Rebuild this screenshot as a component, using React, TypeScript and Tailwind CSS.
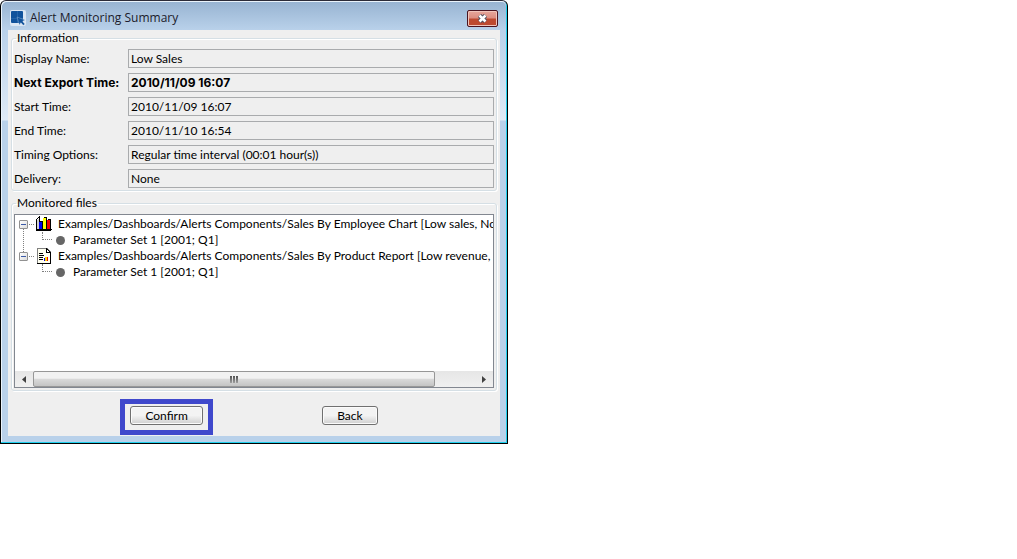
import { ReactNode } from "react";

type Field = { id: string; label: string; value: string; bold?: boolean };

const fields: Field[] = [
  { id: "display-name", label: "Display Name:", value: "Low Sales" },
  { id: "next-export", label: "Next Export Time:", value: "2010/11/09 16:07", bold: true },
  { id: "start-time", label: "Start Time:", value: "2010/11/09 16:07" },
  { id: "end-time", label: "End Time:", value: "2010/11/10 16:54" },
  { id: "timing", label: "Timing Options:", value: "Regular time interval (00:01 hour(s))" },
  { id: "delivery", label: "Delivery:", value: "None" },
];

function AppIcon() {
  return (
    <svg width="16" height="16" viewBox="0 0 16 16" aria-hidden="true" className="shrink-0">
      <rect width="16" height="16" rx="2" fill="#dbe6f3" />
      <rect x="1" y="1" width="12" height="12" rx="1" fill="#10529c" />
      <path d="M7.500 1v12M1 8.500h12" stroke="#2f6db2" strokeWidth=".6" />
      <path d="M7 7l8 3-2.600 1.200 2.400 2.800-1.500 1.300-2.500-2.800L9.500 15z" fill="#10529c" stroke="#dbe6f3" strokeWidth=".3" />
    </svg>
  );
}

function ChartIcon() {
  return (
    <svg width="16" height="16" viewBox="0 0 16 16" aria-hidden="true" shapeRendering="crispEdges" className="shrink-0">
      <path d="M1 4l3-3v11l-3 2z" fill="#d0d0d0" />
      <path d="M0 3h1v12H0zM1 2h1v1H1zM2 1h1v1H2zM3 0h1v6H3zM0 14h15v1H0zM1 13h15v1H1z" fill="#000" />
      <path d="M3 6h3v7H3z" fill="#0000f0" />
      <path d="M4 5h3v1H4zM6 6h1v7H6z" fill="#000" />
      <path d="M7 2h3v11H7z" fill="#ffff00" />
      <path d="M8 1h3v1H8zM10 2h1v11h-1z" fill="#000" />
      <path d="M11 4h3v9h-3z" fill="#f00000" />
      <path d="M12 3h3v1h-3zM14 4h1v9h-1z" fill="#000" />
    </svg>
  );
}

function ReportIcon() {
  return (
    <svg width="16" height="16" viewBox="0 0 16 16" aria-hidden="true" shapeRendering="crispEdges" className="shrink-0">
      <path d="M1 0h10l4 4v12H1z" fill="#808080" />
      <path d="M2 1h8v4h4v10H2z" fill="#fffff0" />
      <path d="M11 1h1v1h1v1h1v1h-3z" fill="#fff" />
      <path d="M10 0h1v4h4v1h-5zM14 5h1v11h-1zM1 15h14v1H1zM11 1h1v1h-1zM12 2h1v1h-1zM13 3h1v1h-1z" fill="#000" />
      <path d="M3 5h4v1H3zM3 7h5v1H3zM3 9h4v1H3zM3 11h4v1H3z" fill="#000" />
      <path d="M8 10h1v3H8z" fill="#0000f0" />
      <path d="M9 9h2v4H9z" fill="#ffd800" />
      <path d="M11 9h1v4h-1z" fill="#f00000" />
    </svg>
  );
}

function GroupBox({ title, children }: { title: string; children: ReactNode }) {
  return (
    <fieldset className="min-w-0 rounded-[3px] border border-[#d5dfe5] px-[2px] pb-[2px] shadow-[inset_1px_1px_0_#fff,1px_1px_0_#fff]">
      <legend className="ml-[2px] px-px text-[12px] leading-[14px]">{title}</legend>
      {children}
    </fieldset>
  );
}

function TreeItem({ icon, label, child, last }: { icon: ReactNode; label: string; child: string; last?: boolean }) {
  return (
    <li role="treeitem" aria-expanded="true" className="flex">
      <div className="flex w-[9px] shrink-0 flex-col items-center">
        <button
          type="button"
          aria-label="Collapse"
          className="mt-1 flex size-[9px] shrink-0 items-center justify-center rounded-[1px] border border-[#919191] bg-linear-to-br from-white to-[#dcdcdc]"
        >
          <span className="h-px w-[5px] bg-[#3b5aa8]" />
        </button>
        {!last && <span className="-mb-1 w-px grow border-l border-dotted border-[#808080]" />}
      </div>
      <div className="min-w-0 grow">
        <div className="flex h-4 items-center whitespace-nowrap">
          <span className="mr-[2px] ml-px w-[5px] shrink-0 border-t border-dotted border-[#808080]" />
          {icon}
          <span className="ml-[6px]">{label}</span>
        </div>
        <ul role="group">
          <li role="treeitem" className="flex h-4 items-center whitespace-nowrap">
            <span className="mb-2 ml-[14px] h-2 w-[10px] shrink-0 border-b border-l border-dotted border-[#808080]" />
            <span className="mr-[8px] ml-1 size-[9px] shrink-0 rounded-full bg-[#666]" />
            <span>{child}</span>
          </li>
        </ul>
      </div>
    </li>
  );
}

function PushButton({ children }: { children: ReactNode }) {
  return (
    <button
      type="button"
      className="h-[19px] rounded-[3px] border border-[#707070] bg-linear-to-b from-[#f3f3f3] from-50% to-[#cfcfcf] to-100% px-[14px] text-[12px] leading-[17px] shadow-[inset_0_0_0_1px_#fbfbfb]"
    >
      {children}
    </button>
  );
}

export default function App() {
  return (
    <main className="min-h-screen bg-white font-['Lato','Noto_Sans_CJK_JP',sans-serif] text-[12px] leading-4 text-black">
      <section
        aria-labelledby="dialog-title"
        className="w-full max-w-[508px] rounded-t-[6px] border border-black border-t-[#2b2b38] bg-[linear-gradient(to_bottom,#b9d1ea_30px,#dfeaf6_119px,#b9d1ea_120px)] shadow-[inset_-1px_-1px_0_#20d0ee,inset_1px_1px_0_#eaf3fb]"
      >
        <header className="mx-px mt-px flex h-7 items-center rounded-t-[5px] bg-linear-to-b from-[#98b4d2] to-[#b9d1ea] pt-1 pr-2 pl-2">
          <AppIcon />
          <h1 id="dialog-title" className="ml-1 grow font-['Open_Sans',sans-serif] text-[12px] leading-4 text-[#1b1b2b]">
            Alert Monitoring Summary
          </h1>
          <button
            type="button"
            aria-label="Close"
            className="flex h-[17px] w-[31px] items-center justify-center rounded-[2px] border border-[#4a1420] bg-linear-to-b from-[#e6a79c] from-0% via-[#dc8d80] via-48% to-[#bd4a30] to-52% shadow-[inset_0_0_0_1px_#f0c4bb]"
          >
            <svg width="11" height="9" viewBox="0 0 11 9" aria-hidden="true">
              <path d="M2.500 1.500l6 6M8.500 1.500l-6 6" stroke="#4a4f60" strokeWidth="4.500" />
              <path d="M2.500 1.500l6 6M8.500 1.500l-6 6" stroke="#fff" strokeWidth="2.600" />
            </svg>
          </button>
        </header>

        <div className="mx-[7px] mb-[7px] bg-[#efefef] px-[3px] pt-px">
          <GroupBox title="Information">
            <div className="flex flex-col gap-[5px] pt-1">
              {fields.map((f) => (
                <div key={f.id} className={f.bold ? "flex items-center font-['Inter',sans-serif] font-bold" : "flex items-center"}>
                  <label htmlFor={f.id} className="w-[114px] shrink-0 whitespace-nowrap">
                    {f.label}
                  </label>
                  <input
                    id={f.id}
                    readOnly
                    value={f.value}
                    className="h-[19px] min-w-0 grow border border-[#a9abad] bg-[#efefef] px-[2px] leading-4 outline-none"
                  />
                </div>
              ))}
            </div>
          </GroupBox>

          <div className="mt-[5px]">
            <GroupBox title="Monitored files">
              <div className="mt-1 border border-[#828790] bg-white">
                <ul role="tree" aria-label="Monitored files" className="h-[156px] overflow-hidden pt-px pl-1">
                  <TreeItem
                    icon={<ChartIcon />}
                    label="Examples/Dashboards/Alerts Components/Sales By Employee Chart [Low sales, No"
                    child="Parameter Set 1 [2001; Q1]"
                  />
                  <TreeItem
                    icon={<ReportIcon />}
                    label="Examples/Dashboards/Alerts Components/Sales By Product Report [Low revenue, N"
                    child="Parameter Set 1 [2001; Q1]"
                    last
                  />
                </ul>
                <div className="flex h-4 bg-linear-to-b from-[#e6e6e6] to-[#f0f0f0]">
                  <button type="button" aria-label="Scroll left" className="flex w-[18px] shrink-0 items-center justify-center">
                    <svg width="4" height="7" viewBox="0 0 4 7" aria-hidden="true">
                      <path d="M4 0v7L0 3.500z" fill="#404040" />
                    </svg>
                  </button>
                  <div className="flex min-w-0 grow">
                    <div className="flex w-[91%] items-center justify-center gap-px rounded-[2px] border border-[#979797] bg-linear-to-b from-[#f2f2f2] from-45% via-[#dadada] via-50% to-[#c4c4c4]">
                      <span className="h-[7px] w-[2px] bg-linear-to-b from-[#505050] to-[#a0a0a0]" />
                      <span className="h-[7px] w-[2px] bg-linear-to-b from-[#505050] to-[#a0a0a0]" />
                      <span className="h-[7px] w-[2px] bg-linear-to-b from-[#505050] to-[#a0a0a0]" />
                    </div>
                  </div>
                  <button type="button" aria-label="Scroll right" className="flex w-[18px] shrink-0 items-center justify-center">
                    <svg width="4" height="7" viewBox="0 0 4 7" aria-hidden="true">
                      <path d="M0 0v7l4-3.500z" fill="#404040" />
                    </svg>
                  </button>
                </div>
              </div>
            </GroupBox>
          </div>

          <div className="flex justify-evenly pt-[15px] pb-[11px]">
            <div className="relative flex">
              <PushButton>Confirm</PushButton>
              <span className="pointer-events-none absolute -top-[7px] -right-[10px] -bottom-[10px] -left-[10px] border-[5px] border-[#3f48cc]" />
            </div>
            <PushButton>Back</PushButton>
          </div>
        </div>
      </section>
    </main>
  );
}
